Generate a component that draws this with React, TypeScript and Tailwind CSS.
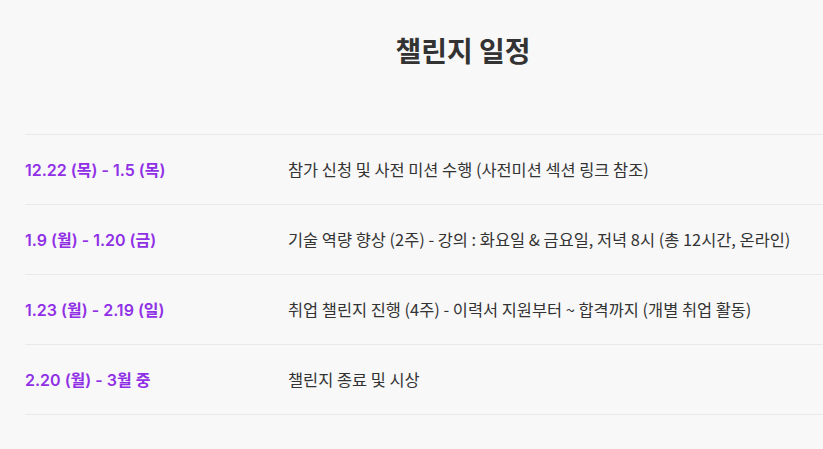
import React from "react";

const rows = [
  { date: "12.22 (목) - 1.5 (목)", desc: "참가 신청 및 사전 미션 수행 (사전미션 섹션 링크 참조)" },
  { date: "1.9 (월) - 1.20 (금)", desc: "기술 역량 향상 (2주) - 강의 : 화요일 & 금요일, 저녁 8시 (총 12시간, 온라인)" },
  { date: "1.23 (월) - 2.19 (일)", desc: "취업 챌린지 진행 (4주) - 이력서 지원부터 ~ 합격까지 (개별 취업 활동)" },
  { date: "2.20 (월) - 3월 중", desc: "챌린지 종료 및 시상" },
];

export default function App() {
  return (
    <div className="w-[823px] h-[449px] overflow-hidden bg-[#f8f8f8]">
      <div className="ml-[25px] w-[876px]">
        <div className="h-[134px] pt-[30px]">
          <h1 className="text-center text-[28px] leading-[40px] font-bold text-[#333333] [font-family:'Noto_Sans_CJK_KR',sans-serif]">
            챌린지 일정
          </h1>
        </div>
        <div className="border-t border-[#e9e9e9]">
          {rows.map((r) => (
            <div key={r.date} className="flex h-[70px] items-center border-b border-[#e9e9e9]">
              <div className="w-[263px] shrink-0 text-[16px] font-semibold text-[#9030e6] [font-family:Inter,'Noto_Sans_CJK_KR',sans-serif]">
                {r.date}
              </div>
              <div className="text-[16.4px] -mt-[1px] text-[#333333] [font-family:'Noto_Sans_CJK_KR',sans-serif]">
                {r.desc}
              </div>
            </div>
          ))}
        </div>
      </div>
    </div>
  );
}
